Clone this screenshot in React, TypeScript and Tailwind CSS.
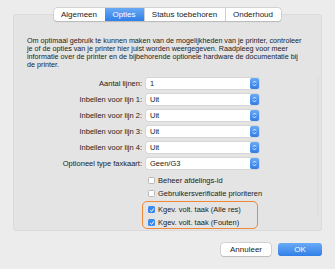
import React from "react";

const font = { fontFamily: '"Liberation Sans", Arial, sans-serif' };

const Stepper = () => (
  <div className="w-[9px] h-full rounded-[2px] bg-gradient-to-b from-[#6aaaf5] to-[#2f7de6] flex items-center justify-center">
    <svg width="5" height="7" viewBox="0 0 5 7" fill="none" stroke="white" strokeWidth="0.9">
      <path d="M1 2.6 L2.5 1.1 L4 2.6" />
      <path d="M1 4.4 L2.5 5.9 L4 4.4" />
    </svg>
  </div>
);

const PopupRow = ({ label, value }: { label: string; value: string }) => (
  <div className="flex items-center h-[11px]">
    <div className="w-[132px] text-right pr-[4px] text-[7.5px] text-[#222]">{label}</div>
    <div className="w-[113px] h-[11px] flex bg-white rounded-[2px] shadow-[0_0_0_0.5px_#c8c8c8]">
      <div className="flex-1 pl-[4px] text-[7.5px] leading-[11px] text-[#222]">{value}</div>
      <Stepper />
    </div>
  </div>
);

const Check = ({ label, checked }: { label: string; checked?: boolean }) => (
  <div className="flex items-center h-[7px] gap-[3px]">
    {checked ? (
      <div className="w-[7px] h-[7px] rounded-[1.5px] bg-[#3b88ee] flex items-center justify-center">
        <svg width="6" height="6" viewBox="0 0 6 6" fill="none" stroke="white" strokeWidth="1">
          <path d="M1.2 3.2 L2.5 4.5 L4.8 1.4" />
        </svg>
      </div>
    ) : (
      <div className="w-[7px] h-[7px] rounded-[1.5px] bg-white border border-[#b8b8b8]" />
    )}
    <span className="text-[7.5px] text-[#222] leading-[7px]">{label}</span>
  </div>
);

export default function App() {
  const tabs = ["Algemeen", "Opties", "Status toebehoren", "Onderhoud"];
  const widths = ["w-[51px]", "w-[39px]", "w-[81px]", "w-[56px]"];
  return (
    <div className="w-[335px] h-[269px] bg-[#ececec] overflow-hidden" style={font}>
      <div className="pt-[8px] flex flex-col items-center">
        <div className="relative z-10 flex h-[13px] ml-[-1px] rounded-[3px] bg-white shadow-[0_0_0_0.5px_#bdbdbd,0_0.5px_1px_rgba(0,0,0,0.2)] overflow-hidden">
          {tabs.map((t, i) => (
            <div
              key={t}
              className={
                widths[i] +
                " flex items-center justify-center text-[8px] " +
                (i === 1
                  ? "bg-gradient-to-b from-[#69a8f4] to-[#2f7fe8] text-white"
                  : "text-[#1a1a1a]") +
                (i > 1 ? " border-l border-[#d0d0d0]" : "")
              }
            >
              {t}
            </div>
          ))}
        </div>
      </div>
      <div className="ml-[13px] mt-[-7px] w-[309px] h-[217px] bg-[#e4e4e4] border border-[#dadada] rounded-[3px] flex">
        <div className="flex-1 flex flex-col">
          <p className="ml-[13px] mt-[22px] w-[290px] whitespace-nowrap text-[7.2px] leading-[8px] text-[#222]">
            Om optimaal gebruik te kunnen maken van de mogelijkheden van je printer, controleer
            <br />
            je of de opties van je printer hier juist worden weergegeven. Raadpleeg voor meer
            <br />
            informatie over de printer en de bijbehorende optionele hardware de documentatie bij
            <br />
            de printer.
          </p>
          <div className="mt-[9px] flex flex-col gap-[5px]">
            <PopupRow label="Aantal lijnen:" value="1" />
            <PopupRow label="Inbellen voor lijn 1:" value="Uit" />
            <PopupRow label="Inbellen voor lijn 2:" value="Uit" />
            <PopupRow label="Inbellen voor lijn 3:" value="Uit" />
            <PopupRow label="Inbellen voor lijn 4:" value="Uit" />
            <PopupRow label="Optioneel type faxkaart:" value="Geen/G3" />
          </div>
          <div className="ml-[134px] mt-[8px] flex flex-col gap-[6px]">
            <Check label="Beheer afdelings-id" />
            <Check label="Gebruikersverificatie prioriteren" />
          </div>
          <div className="ml-[128px] mt-[4px] w-[116px] h-[28px] border border-[#f0883a] rounded-[5px] pl-[5px] pt-[4px] flex flex-col gap-[6px]">
            <Check label="Kgev. volt. taak (Alle res)" checked />
            <Check label="Kgev. volt. taak (Fouten)" checked />
          </div>
        </div>
        <div className="mt-[62px] mr-[15px] w-[7px] h-[140px] bg-[#fafafa] border border-[#dedede] rounded-[3px] overflow-hidden">
          <div className="h-[100px] bg-[#c3c3c3] rounded-[3px]" />
        </div>
      </div>
      <div className="flex justify-end gap-[7px] mt-[12px] mr-[13px]">
        <div className="w-[50px] h-[13px] bg-white rounded-[3px] shadow-[0_0_0_0.5px_#bdbdbd,0_0.5px_1px_rgba(0,0,0,0.2)] flex items-center justify-center text-[8px] text-[#1a1a1a]">
          Annuleer
        </div>
        <div className="w-[44px] h-[13px] rounded-[3px] bg-gradient-to-b from-[#6aaaf5] to-[#2f7fe8] flex items-center justify-center text-[8px] text-white">
          OK
        </div>
      </div>
    </div>
  );
}
